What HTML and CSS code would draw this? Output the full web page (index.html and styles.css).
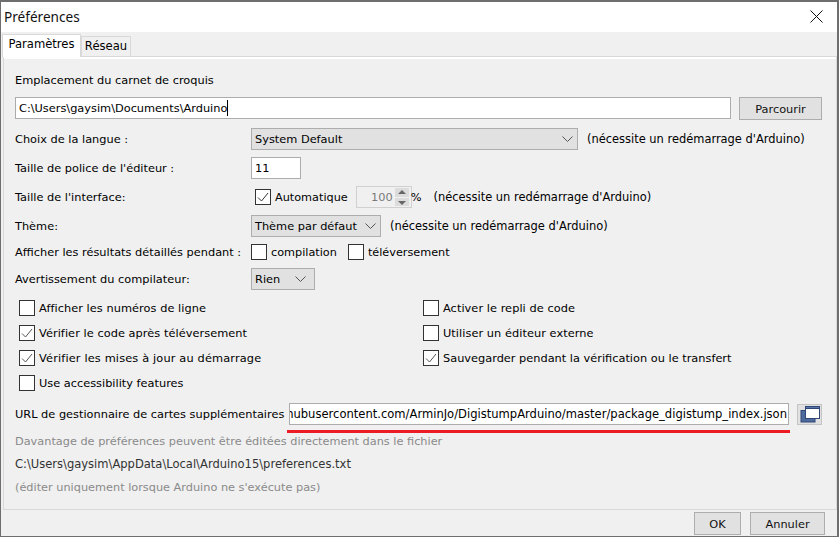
FILE: index.html
```html
<!DOCTYPE html>
<html lang="fr">
<head>
<meta charset="utf-8">
<title>Préférences</title>
<link rel="stylesheet" href="styles.css">
</head>
<body>
<div class="window">
  <header class="titlebar">
    <span class="title">Préférences</span>
    <svg class="close" width="13" height="13" viewBox="0 0 13 13"><path d="M0.5 0.5L12.5 12.5M12.5 0.5L0.5 12.5" stroke="#111" stroke-width="1" fill="none"/></svg>
  </header>
  <div class="tabstrip">
    <div class="tab active">Paramètres</div>
    <div class="tab">Réseau</div>
  </div>
  <main class="panel">
    <div class="heading">Emplacement du carnet de croquis</div>
    <div class="row sketch">
      <div class="field grow"><span>C:\Users\gaysim\Documents\Arduino</span><i class="caret"></i></div>
      <button class="btn browse">Parcourir</button>
    </div>
    <div class="row lang">
      <label class="lbl">Choix de la langue :</label>
      <div class="select w-lang"><span>System Default</span><svg class="chev" width="11" height="6" viewBox="0 0 11 6"><path d="M0.5 0.5L5.5 5.5L10.5 0.5" stroke="#555" fill="none"/></svg></div>
      <span class="note n-lang">(nécessite un redémarrage d'Arduino)</span>
    </div>
    <div class="row font">
      <label class="lbl">Taille de police de l'éditeur :</label>
      <div class="field w-font">11</div>
    </div>
    <div class="row iface">
      <label class="lbl">Taille de l'interface:</label>
      <span class="box checked auto"><svg width="14" height="14" viewBox="0 0 14 14"><path d="M2 7.5L5.5 11L12 3" stroke="#333" fill="none"/></svg></span>
      <span class="boxlabel">Automatique</span>
      <div class="spin"><span class="spinval">100</span><span class="arrows"><b class="up"></b><b class="down"></b></span></div>
      <span class="pct">%</span>
      <span class="note n-iface">(nécessite un redémarrage d'Arduino)</span>
    </div>
    <div class="row theme">
      <label class="lbl">Thème:</label>
      <div class="select w-theme"><span>Thème par défaut</span><svg class="chev" width="11" height="6" viewBox="0 0 11 6"><path d="M0.5 0.5L5.5 5.5L10.5 0.5" stroke="#555" fill="none"/></svg></div>
      <span class="note n-theme">(nécessite un redémarrage d'Arduino)</span>
    </div>
    <div class="row verbose">
      <label class="lbl">Afficher les résultats détaillés pendant :</label>
      <span class="box"></span><span class="boxlabel l-comp">compilation</span>
      <span class="box"></span><span class="boxlabel">téléversement</span>
    </div>
    <div class="row warn">
      <label class="lbl">Avertissement du compilateur:</label>
      <div class="select w-warn"><span>Rien</span><svg class="chev" width="11" height="6" viewBox="0 0 11 6"><path d="M0.5 0.5L5.5 5.5L10.5 0.5" stroke="#555" fill="none"/></svg></div>
    </div>
    <div class="checks">
      <div class="check"><span class="box"></span><span class="a-little-wide">Afficher les numéros de ligne</span></div>
      <div class="check"><span class="box"></span><span class="a-little-wide">Activer le repli de code</span></div>
      <div class="check"><span class="box checked"><svg width="14" height="14" viewBox="0 0 14 14"><path d="M2 7.5L5.5 11L12 3" stroke="#555" fill="none"/></svg></span><span class="a-little-wide">Vérifier le code après téléversement</span></div>
      <div class="check"><span class="box"></span><span class="a-little-wide">Utiliser un éditeur externe</span></div>
      <div class="check"><span class="box checked"><svg width="14" height="14" viewBox="0 0 14 14"><path d="M2 7.5L5.5 11L12 3" stroke="#555" fill="none"/></svg></span><span class="wide">Vérifier les mises à jour au démarrage</span></div>
      <div class="check"><span class="box checked"><svg width="14" height="14" viewBox="0 0 14 14"><path d="M2 7.5L5.5 11L12 3" stroke="#555" fill="none"/></svg></span><span>Sauvegarder pendant la vérification ou le transfert</span></div>
      <div class="check"><span class="box"></span><span>Use accessibility features</span></div>
    </div>
    <div class="row url">
      <label class="urllbl">URL de gestionnaire de cartes supplémentaires</label>
      <div class="field urlfield"><span>hubusercontent.com/ArminJo/DigistumpArduino/master/package_digistump_index.json</span></div>
      <button class="btn iconbtn"><svg width="20" height="17" viewBox="0 0 20 17"><rect x="1" y="4.5" width="14" height="11.5" fill="#4f6a9c" stroke="#2f4677"/><rect x="5.5" y="0.5" width="14" height="12" fill="#fff" stroke="#2f4677"/><rect x="5.5" y="0.5" width="14" height="2" fill="#5a76a8" stroke="#2f4677"/></svg></button>
      <div class="redline"></div>
    </div>
    <div class="info muted">Davantage de préférences peuvent être éditées directement dans le fichier</div>
    <div class="info path">C:\Users\gaysim\AppData\Local\Arduino15\preferences.txt</div>
    <div class="info muted">(éditer uniquement lorsque Arduino ne s'exécute pas)</div>
  </main>
  <footer class="footer">
    <button class="btn ok">OK</button>
    <button class="btn cancel">Annuler</button>
  </footer>
</div>
</body>
</html>
```
FILE: styles.css
```css
* { box-sizing: border-box; }
html, body { margin: 0; padding: 0; }
body { width: 839px; height: 538px; background: #fff; overflow: hidden; font-family: "DejaVu Sans", sans-serif; font-size: 11.35px; color: #000; }
.window { width: 839px; height: 537px; border: 1px solid #6e6e6e; border-width: 2px 2px 1px 1px; background: #f0f0f0; display: flex; flex-direction: column; }
.titlebar { height: 30px; background: #fff; display: flex; align-items: center; justify-content: space-between; padding: 0 14px 2px 3px; flex: none; }
.title { font-family: "Noto Sans", sans-serif; font-size: 13.6px; color: #111; }
.tabstrip { height: 24px; display: flex; align-items: flex-end; flex: none; padding-left: 1px; position: relative; }
.tab { height: 20px; width: 50px; border: 1px solid #d9d9d9; border-bottom: 0; background: #f0f0f0; text-align: center; line-height: 19px; font-size: 11.6px; }
.tab.active { height: 23px; width: 79px; background: #fff; border-color: #d9d9d9; line-height: 19px; padding-bottom: 2px; position: relative; top: 1px; z-index: 1; }
.panel { flex: none; height: 454px; margin-left: 2px; border: 1px solid #d9d9d9; position: relative; padding: 0 12px 0 11px; box-shadow: inset 0 2px 0 #fff; }
.heading { margin-top: 16px; height: 14px; line-height: 14px; }
.row { display: flex; align-items: center; flex: none; }
.lbl { width: 236px; flex: none; white-space: nowrap; }
.field { height: 22px; background: #fff; border: 1px solid #acacac; display: flex; align-items: center; padding-left: 3px; white-space: nowrap; overflow: hidden; }
.grow { width: 716px; }
.caret { width: 1px; height: 16px; background: #000; margin-left: 0; }
.btn { font: inherit; color: #111; background: #e1e1e1; border: 1px solid #adadad; padding: 0; height: 23px; display: block; }
.browse { width: 83px; margin-left: 8px; }
.sketch { margin-top: 10px; height: 23px; align-items: flex-start; }
.select { height: 22px; background: #e1e1e1; border: 1px solid #adadad; display: flex; align-items: center; justify-content: space-between; padding: 0 4px 0 3px; flex: none; }
.note { white-space: nowrap; font-size: 11.45px; }
.lang { margin-top: 8px; height: 22px; }
.w-lang { width: 327px; }
.n-lang { margin-left: 9px; }
.font { margin-top: 7px; height: 22px; }
.w-font { width: 50px; }
.iface { margin-top: 7px; height: 22px; }
.box { width: 16px; height: 16px; border: 1px solid #333; background: #fff; flex: none; display: flex; align-items: center; justify-content: center; }
.auto { margin-left: 4px; }
.boxlabel { margin-left: 4px; white-space: nowrap; font-size: 11.25px; }
.spin { width: 56px; height: 22px; margin-left: 8px; border: 1px solid #d0d0d0; background: #f0f0f0; display: flex; align-items: center; justify-content: flex-end; padding-right: 2px; flex: none; }
.spinval { color: #7a7a7a; margin-right: 2px; }
.arrows { width: 14px; height: 18px; display: flex; flex-direction: column; gap: 1px; }
.arrows b { display: block; flex: 1; background: #dcdcdc; position: relative; }
.arrows b::after { content: ""; position: absolute; left: 3px; border-left: 4px solid transparent; border-right: 4px solid transparent; }
.up::after { top: 2px; border-bottom: 4px solid #666; }
.down::after { top: 3px; border-top: 4px solid #666; }
.pct { margin-left: -1px; }
.n-iface { margin-left: 12px; }
.theme { margin-top: 7px; height: 22px; }
.w-theme { width: 130px; }
.n-theme { margin-left: 9px; }
.verbose { margin-top: 6px; height: 18px; }
.l-comp { margin-right: 11px; }
.warn { margin-top: 7px; height: 22px; }
.w-warn { width: 64px; padding-right: 8px; }
.checks { display: grid; grid-template-columns: 404px 1fr; grid-auto-rows: 25px; margin-top: 5px; padding-left: 4px; }
.check { display: flex; align-items: center; gap: 4px; white-space: nowrap; }
.a-little-wide { letter-spacing: 0.05px; }
.wide { letter-spacing: 0.15px; }
.url { margin-top: 8px; height: 22px; position: relative; }
.urllbl { width: 274px; flex: none; white-space: nowrap; }
.urlfield { width: 500px; padding: 0 1px 0 0; justify-content: flex-end; flex: none; font-size: 11.55px; }
.urlfield span { flex: none; }
.iconbtn { width: 25px; height: 21px; margin-left: 8px; display: flex; align-items: center; justify-content: center; background: #e1e1e1; border-color: #c4c4c4; }
.redline { position: absolute; left: 272px; top: 27px; width: 503px; height: 3px; background: #ed1c24; }
.info { height: 23px; line-height: 23px; white-space: nowrap; color: #333; }
.info.muted { color: #8a8a8a; font-size: 11.3px; }
.info.path { font-size: 11.52px; }
.url + .info { margin-top: 5px; }
.footer { flex: none; display: flex; justify-content: flex-end; gap: 9px; padding: 2px 12px 0 0; }
.ok { width: 47px; height: 23px; }
.cancel { width: 75px; height: 23px; }
```
